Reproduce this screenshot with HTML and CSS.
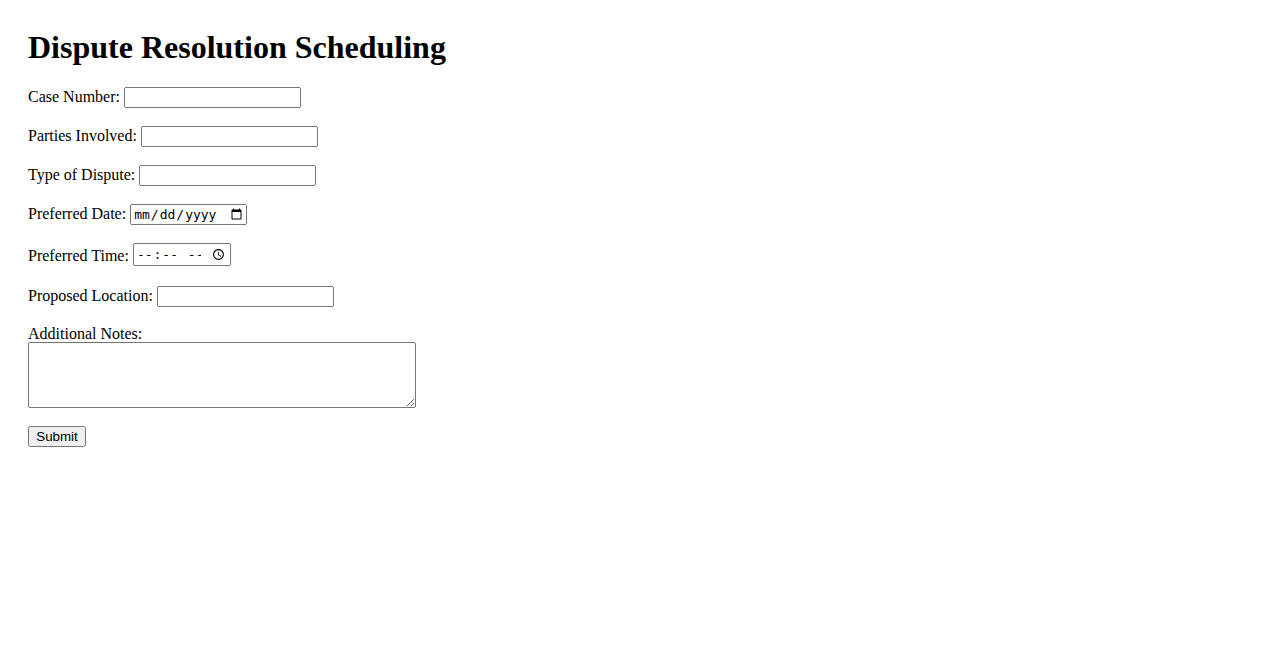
FILE: index.html
```html
<!DOCTYPE html>
<html>
<head>
<meta charset="utf-8">
<title>Dispute Resolution Scheduling</title>
<link rel="stylesheet" href="styles.css">
</head>
<body>
<h1 class="title">Dispute Resolution Scheduling</h1>
<form class="form">
  <div class="row"><label for="case">Case Number:</label> <input class="text" type="text" id="case"></div>
  <div class="row"><label for="parties">Parties Involved:</label> <input class="text" type="text" id="parties"></div>
  <div class="row"><label for="type">Type of Dispute:</label> <input class="text" type="text" id="type"></div>
  <div class="row"><label for="date">Preferred Date:</label> <input class="date" type="date" id="date"></div>
  <div class="row row-time"><label for="time">Preferred Time:</label> <input class="time" type="time" id="time"></div>
  <div class="row"><label for="loc">Proposed Location:</label> <input class="text" type="text" id="loc"></div>
  <div class="row"><label for="notes">Additional Notes:</label><textarea class="notes" id="notes" rows="4" cols="50"></textarea></div>
  <div class="row"><button class="submit" type="submit">Submit</button></div>
</form>
</body>
</html>
```
FILE: styles.css
```css
body {
  margin: 0;
  padding: 0 28px;
  font-family: "Liberation Serif", "Times New Roman", serif;
  font-size: 16px;
}
.title {
  font-size: 32px;
  margin: 29px 0 21px;
}
.row {
  margin-bottom: 18px;
}
.row-time {
  margin-bottom: 20px;
}
.text {
  box-sizing: border-box;
  width: 177px;
  height: 21px;
}
.date {
  box-sizing: border-box;
  width: 117px;
  height: 21px;
  font-size: 13px;
}
.time {
  box-sizing: border-box;
  width: 98px;
  height: 23px;
  font-size: 13px;
  vertical-align: 2px;
}
.notes {
  display: block;
  box-sizing: border-box;
  width: 388px;
  height: 66px;
  margin-top: -1px;
}
.submit {
  box-sizing: border-box;
  width: 58px;
  height: 21px;
  font-family: "Liberation Sans", Arial, sans-serif;
  font-size: 13.33px;
}
```
